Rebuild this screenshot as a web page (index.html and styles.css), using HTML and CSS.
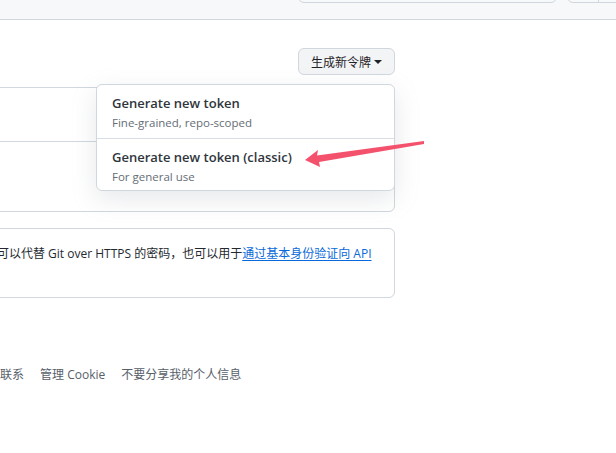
FILE: index.html
```html
<!DOCTYPE html>
<html lang="zh-CN">
<head>
<meta charset="utf-8">
<title>Tokens</title>
<link rel="stylesheet" href="styles.css">
</head>
<body>
<header class="header">
  <div class="search"></div>
  <div class="btn-group"><span class="seg"></span><span class="seg"></span></div>
</header>
<main class="main">
  <div class="toolbar">
    <button class="btn">生成新令牌 <span class="caret"></span></button>
  </div>
  <section class="box box1">
    <div class="row row1"></div>
    <div class="row row2"></div>
  </section>
  <section class="box box2">
    <p class="desc">可以代替 Git over HTTPS 的密码，也可以用于<a class="link" href="#">通过基本身份验证向 API</a></p>
  </section>
  <footer class="footer">
    <a href="#">联系</a>
    <a href="#">管理 Cookie</a>
    <a href="#">不要分享我的个人信息</a>
  </footer>
  <div class="menu">
    <div class="item">
      <div class="item-title">Generate new token</div>
      <div class="item-sub">Fine-grained, repo-scoped</div>
    </div>
    <div class="item item-last">
      <div class="item-title">Generate new token (classic)</div>
      <div class="item-sub">For general use</div>
    </div>
  </div>
</main>
<svg class="arrow" width="616" height="453" viewBox="0 0 616 453" aria-hidden="true">
  <polygon points="305,160 318,150 317,155.5 424,141 424,144 319,162 320,167" fill="#f4516c"/>
</svg>
</body>
</html>
```

FILE: styles.css
```css
html, body {
  margin: 0;
  padding: 0;
  background: #ffffff;
  overflow: hidden;
}
body {
  width: 616px;
  height: 453px;
  position: relative;
  font-family: "Open Sans", "Noto Sans CJK SC", sans-serif;
  font-size: 12px;
  color: #1f2328;
}
.header {
  height: 19px;
  background: #f6f8fa;
  border-bottom: 1px solid #d0d7de;
  display: flex;
  justify-content: flex-end;
  overflow: hidden;
}
.search {
  flex: 0 0 259px;
  height: 24px;
  margin-top: -21px;
  margin-right: 10px;
  border: 1px solid #d0d7de;
  border-radius: 6px;
  box-sizing: border-box;
}
.btn-group {
  flex: 0 0 60px;
  height: 24px;
  margin-top: -21px;
  margin-right: -15px;
  border: 1px solid #d0d7de;
  border-radius: 6px;
  box-sizing: border-box;
  display: flex;
}
.seg {
  width: 30px;
  border-right: 1px solid #d0d7de;
}
.main {
  width: 395px;
  position: relative;
}
.toolbar {
  display: flex;
  justify-content: flex-end;
  padding-top: 28px;
}
.btn {
  width: 97px;
  height: 27px;
  box-sizing: border-box;
  background: #f3f4f6;
  border: 1px solid #d0d7de;
  border-radius: 6px;
  font-family: "Noto Sans CJK SC", sans-serif;
  font-size: 12px;
  color: #1f2328;
  display: flex;
  align-items: center;
  justify-content: center;
  gap: 3px;
  padding: 0;
}
.caret {
  width: 0;
  height: 0;
  border-left: 4px solid transparent;
  border-right: 4px solid transparent;
  border-top: 4px solid #1f2328;
  margin-top: 1px;
}
.box {
  border: 1px solid #d0d7de;
  border-radius: 6px;
  margin-left: -10px;
}
.box1 {
  margin-top: 12px;
}
.row1 {
  height: 53px;
  border-bottom: 1px solid #d0d7de;
}
.row2 {
  height: 69px;
}
.box2 {
  margin-top: 16px;
  padding: 16px 0 0 6px;
  height: 52px;
}
.desc {
  margin: 0;
  line-height: 18px;
  white-space: nowrap;
  color: #24292f;
}
.link {
  color: #0969da;
  text-decoration: underline;
  text-underline-offset: 2px;
}
.footer {
  margin-top: 68px;
  display: flex;
  gap: 16px;
  line-height: 18px;
  white-space: nowrap;
}
.footer a {
  color: #57606a;
  text-decoration: none;
}
.menu {
  position: absolute;
  left: 96px;
  top: 64px;
  width: 299px;
  box-sizing: border-box;
  background: #ffffff;
  border: 1px solid #d0d7de;
  border-radius: 6px;
  box-shadow: 0 8px 24px rgba(140, 149, 159, 0.22);
}
.item {
  padding: 9px 15px 6px;
  border-bottom: 1px solid #d8dee4;
}
.item-last {
  border-bottom: none;
  padding-bottom: 4px;
}
.item-title {
  font-size: 13px;
  font-weight: 600;
  line-height: 18px;
  color: #2f353c;
}
.item-sub {
  margin-top: 2px;
  font-size: 11.5px;
  line-height: 18px;
  color: #656d76;
}
.arrow {
  position: absolute;
  left: 0;
  top: 0;
  pointer-events: none;
}
```
